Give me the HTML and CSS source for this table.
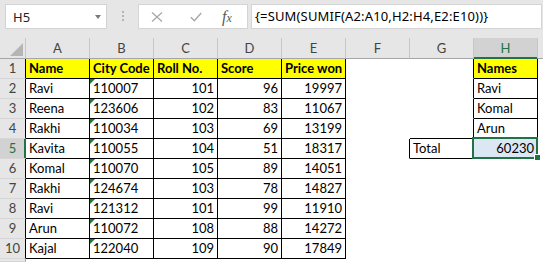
FILE: index.html
```html
<!DOCTYPE html>
<html>
<head>
  <title>SUMIF array total</title>
  <link rel="stylesheet" href="styles.css">
</head>
<body>
  <!-- Formula bar -->
  <div class="formula-bar">
    <div class="name-box">
      <span class="cell-ref">H5</span>
      <span class="caret"></span>
    </div>
    <div class="grip"><i></i><i></i><i></i></div>
    <div class="fx-buttons">
      <svg class="btn-icon" width="12" height="10" viewBox="0 0 12 10">
        <path d="M1 0.5 L11 9.5 M11 0.5 L1 9.5" stroke="#a8a8a8" stroke-width="1.3" fill="none"/>
      </svg>
      <svg class="btn-icon check" width="12" height="10" viewBox="0 0 12 10">
        <path d="M0.8 5.2 L4.4 8.8 L11.2 1" stroke="#a8a8a8" stroke-width="1.4" fill="none"/>
      </svg>
      <span class="fx">f<span class="fx-x">x</span></span>
    </div>
    <div class="formula-input">{=SUM(SUMIF(A2:A10,H2:H4,E2:E10))}</div>
  </div>

  <!-- Sheet -->
  <div class="sheet">
    <!-- column headers -->
    <div class="hd corner"><span class="corner-mark"></span></div>
    <div class="hd">A</div>
    <div class="hd">B</div>
    <div class="hd">C</div>
    <div class="hd">D</div>
    <div class="hd">E</div>
    <div class="hd">F</div>
    <div class="hd">G</div>
    <div class="hd sel">H</div>
    <div class="hd"></div>

    <!-- row 1 -->
    <div class="rn edge">1</div>
    <div class="c b y th">Name</div>
    <div class="c b y th">City Code</div>
    <div class="c b y th">Roll No.</div>
    <div class="c b y th">Score</div>
    <div class="c b y th">Price won</div>
    <div class="c"></div>
    <div class="c lb"></div>
    <div class="c b y th">Names</div>
    <div class="c"></div>

    <!-- row 2 -->
    <div class="rn edge">2</div>
    <div class="c b">Ravi</div>
    <div class="c b t">110007</div>
    <div class="c b n">101</div>
    <div class="c b n">96</div>
    <div class="c b n">19997</div>
    <div class="c"></div>
    <div class="c lb"></div>
    <div class="c b">Ravi</div>
    <div class="c"></div>

    <!-- row 3 -->
    <div class="rn edge">3</div>
    <div class="c b">Reena</div>
    <div class="c b t">123606</div>
    <div class="c b n">102</div>
    <div class="c b n">83</div>
    <div class="c b n">11067</div>
    <div class="c"></div>
    <div class="c lb"></div>
    <div class="c b">Komal</div>
    <div class="c"></div>

    <!-- row 4 -->
    <div class="rn edge">4</div>
    <div class="c b">Rakhi</div>
    <div class="c b t">110034</div>
    <div class="c b n">103</div>
    <div class="c b n">69</div>
    <div class="c b n">13199</div>
    <div class="c"></div>
    <div class="c lb ab"></div>
    <div class="c b">Arun</div>
    <div class="c"></div>

    <!-- row 5 -->
    <div class="rn edge sel">5</div>
    <div class="c b">Kavita</div>
    <div class="c b t">110055</div>
    <div class="c b n">104</div>
    <div class="c b n">51</div>
    <div class="c b n">18317</div>
    <div class="c lb"></div>
    <div class="c b">Total</div>
    <div class="c b n cur">60230</div>
    <div class="c"></div>

    <!-- row 6 -->
    <div class="rn edge">6</div>
    <div class="c b">Komal</div>
    <div class="c b t">110070</div>
    <div class="c b n">105</div>
    <div class="c b n">89</div>
    <div class="c b n">14051</div>
    <div class="c"></div>
    <div class="c"></div>
    <div class="c"></div>
    <div class="c"></div>

    <!-- row 7 -->
    <div class="rn edge">7</div>
    <div class="c b">Rakhi</div>
    <div class="c b t">124674</div>
    <div class="c b n">103</div>
    <div class="c b n">78</div>
    <div class="c b n">14827</div>
    <div class="c"></div>
    <div class="c"></div>
    <div class="c"></div>
    <div class="c"></div>

    <!-- row 8 -->
    <div class="rn edge">8</div>
    <div class="c b">Ravi</div>
    <div class="c b t">121312</div>
    <div class="c b n">101</div>
    <div class="c b n">99</div>
    <div class="c b n">11910</div>
    <div class="c"></div>
    <div class="c"></div>
    <div class="c"></div>
    <div class="c"></div>

    <!-- row 9 -->
    <div class="rn edge">9</div>
    <div class="c b">Arun</div>
    <div class="c b t">110072</div>
    <div class="c b n">108</div>
    <div class="c b n">88</div>
    <div class="c b n">14272</div>
    <div class="c"></div>
    <div class="c"></div>
    <div class="c"></div>
    <div class="c"></div>

    <!-- row 10 -->
    <div class="rn edge">10</div>
    <div class="c b">Kajal</div>
    <div class="c b t">122040</div>
    <div class="c b n">109</div>
    <div class="c b n">90</div>
    <div class="c b n">17849</div>
    <div class="c"></div>
    <div class="c"></div>
    <div class="c"></div>
    <div class="c"></div>

    <!-- row 11, only its top edge is in view -->
    <div class="rn"></div>
    <div class="c"></div>
    <div class="c"></div>
    <div class="c"></div>
    <div class="c"></div>
    <div class="c"></div>
    <div class="c"></div>
    <div class="c"></div>
    <div class="c"></div>
    <div class="c"></div>
  </div>
</body>
</html>
```

FILE: styles.css
```css
html, body {
  margin: 0;
  padding: 0;
  overflow: hidden;
}

body {
  background-color: #fff;
  font-family: 'Lato', 'Liberation Sans', sans-serif;
}

/* Formula bar */
.formula-bar {
  display: flex;
  align-items: flex-start;
  height: 38px;
  box-sizing: border-box;
  padding: 4px 0 0 5px;
  background-color: #e6e6e6;
  font-family: 'Noto Sans', 'Liberation Sans', sans-serif;
  font-size: 13px;
  color: #000;
}

.name-box {
  display: flex;
  align-items: center;
  justify-content: space-between;
  width: 102px;
  height: 25px;
  box-sizing: border-box;
  padding: 0 5px 0 7px;
  background-color: #fff;
  border: 1px solid #d4d4d4;
}

.cell-ref {
  color: #222;
}

.caret {
  width: 0;
  height: 0;
  border-left: 3.5px solid transparent;
  border-right: 3.5px solid transparent;
  border-top: 4px solid #7a7a7a;
  margin-top: 1px;
}

.grip {
  display: flex;
  flex-direction: column;
  gap: 2px;
  width: 2px;
  margin: 7px 14px 0 15px;
}

.grip i {
  display: block;
  width: 2px;
  height: 2px;
  background-color: #b4b4b4;
}

.fx-buttons {
  display: flex;
  align-items: center;
  width: 110px;
  height: 25px;
  box-sizing: border-box;
  padding-left: 12px;
  background-color: #fff;
  border: 1px solid #d4d4d4;
}

.btn-icon {
  display: block;
}

.btn-icon.check {
  margin-left: 27px;
}

.fx {
  margin-left: 20px;
  font-family: 'Liberation Serif', serif;
  font-style: italic;
  font-size: 16px;
  color: #5a5a5a;
  line-height: 1;
}

.fx-x {
  font-size: 12px;
}

.formula-input {
  width: 291px;
  height: 25px;
  box-sizing: border-box;
  margin-left: 3px;
  padding-left: 3px;
  line-height: 23px;
  letter-spacing: 0.15px;
  background-color: #fff;
  border: 1px solid #d4d4d4;
  white-space: nowrap;
  overflow: hidden;
}

/* Sheet grid: the last column and row are only partly in view */
.sheet {
  display: grid;
  grid-template-columns: 26px repeat(8, 64px) 6px;
  grid-template-rows: 21px repeat(10, 20px) 3px;
  font-size: 13px;
  line-height: 19px;
  color: #000;
}

.sheet > div {
  box-sizing: border-box;
  border-right: 1px solid #fff;
  border-bottom: 1px solid #fff;
  padding: 0 3px;
  white-space: nowrap;
  overflow: hidden;
}

.hd {
  background-color: #e6e6e6;
  text-align: center;
  color: #444;
  line-height: 20px;
  border-right-color: #c6c6c6 !important;
  border-bottom-color: #a6a6a6 !important;
}

.hd.sel {
  background-color: #d2d2d2;
  color: #217346;
  border-bottom-color: #217346 !important;
  box-shadow: inset 0 -1px 0 #217346;
}

.corner {
  position: relative;
}

.corner-mark {
  position: absolute;
  right: 2px;
  bottom: 2px;
  width: 0;
  height: 0;
  border-left: 13px solid transparent;
  border-bottom: 13px solid #b5b5b5;
}

.rn {
  background-color: #e6e6e6;
  text-align: center;
  color: #444;
  padding: 0 !important;
  border-right-color: #a6a6a6 !important;
  border-bottom-color: #d6d6d6 !important;
}

.rn.edge {
  border-right-color: #000 !important;
}

.rn.sel {
  background-color: #d2d2d2;
  color: #217346;
  border-right-color: #217346 !important;
  box-shadow: inset -1px 0 0 #217346;
}

/* Cell borders */
.b {
  border-right-color: #000 !important;
  border-bottom-color: #000 !important;
}

.lb {
  border-right-color: #000 !important;
}

.ab {
  border-bottom-color: #000 !important;
}

.y {
  background-color: #ffff00;
}

.th {
  font-weight: bold;
}

.n {
  text-align: right;
}

/* Number stored as text marker */
.t {
  position: relative;
}

.t::before {
  content: "";
  position: absolute;
  top: 0;
  left: 0;
  width: 0;
  height: 0;
  border-top: 5px solid #1e7b34;
  border-right: 5px solid transparent;
}

/* Active cell */
.cur {
  position: relative;
  overflow: visible !important;
  background-color: #dce7f4;
}

.cur::before {
  content: "";
  position: absolute;
  left: -2px;
  top: -2px;
  width: 66px;
  height: 22px;
  box-sizing: border-box;
  border: 2px solid #217346;
}

.cur::after {
  content: "";
  position: absolute;
  left: 60px;
  top: 15px;
  width: 7px;
  height: 7px;
  box-sizing: border-box;
  background-color: #217346;
  border: 1px solid #fff;
}
```
